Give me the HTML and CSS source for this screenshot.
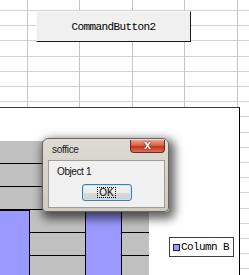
FILE: index.html
```html
<!DOCTYPE html>
<html>
<head>
<meta charset="utf-8">
<link rel="stylesheet" href="styles.css">
</head>
<body>
<div class="sheet">
  <div class="cmd">CommandButton2</div>
  <div class="chart">
    <div class="plot">
      <div class="bar bar-a"></div>
      <div class="bar bar-b"></div>
    </div>
    <div class="legend"><span class="swatch"></span><span class="legend-label">Column B</span></div>
  </div>
  <div class="dialog">
    <div class="titlebar">
      <span class="title">soffice</span>
      <span class="close">x</span>
    </div>
    <div class="client">
      <div class="msg">Object 1</div>
      <div class="actions"><div class="ok"><span class="ok-label">OK</span></div></div>
    </div>
  </div>
</div>
</body>
</html>
```
FILE: styles.css
```css
html, body {
  margin: 0;
  padding: 0;
  background: #fff;
}

.sheet {
  position: relative;
  width: 249px;
  height: 275px;
  overflow: hidden;
  background-color: #fff;
  background-image:
    linear-gradient(to right, #c4c4c4 0 1px, transparent 1px 52px, #c4c4c4 52px 53px, transparent 53px),
    linear-gradient(to bottom, #d2d2d2 0 1px, transparent 1px 15px, #d2d2d2 15px 16px, transparent 16px 30px, #d2d2d2 30px 31px, transparent 31px 46px, #d2d2d2 46px 47px, transparent 47px 61px, #d2d2d2 61px 62px, transparent 62px);
  background-size: 105px 100%, 100% 76px;
  background-position: 27px 0, 0 10px;
}

.cmd {
  position: absolute;
  left: 36px;
  top: 11px;
  width: 155px;
  height: 31px;
  box-sizing: border-box;
  background: #f0f0f0;
  border-top: 1px solid #fafafa;
  border-left: 1px solid #fafafa;
  border-right: 1px solid #1a1a1a;
  border-bottom: 1px solid #1a1a1a;
  display: flex;
  align-items: center;
  justify-content: center;
  font-family: "Liberation Mono", monospace;
  font-size: 11px;
  letter-spacing: -0.6px;
  color: #000;
}

.chart {
  position: absolute;
  left: -10px;
  top: 107px;
  width: 250px;
  height: 200px;
  box-sizing: border-box;
  background: #fff;
  border-top: 1px solid #3a3a3a;
  border-right: 1px solid #000;
  padding-top: 33px;
}

.plot {
  width: 159px;
  height: 160px;
  background-color: #c0c0c0;
  background-image: linear-gradient(to bottom, #000 0 1px, transparent 1px);
  background-size: 100% 23px;
  background-position: 0 22px;
  display: flex;
  align-items: flex-start;
}

.bar {
  margin-top: 69px;
  height: 100px;
  box-sizing: border-box;
  background: #9999ff;
  border: 1px solid #000;
}

.bar-a {
  width: 40px;
}

.bar-b {
  width: 37px;
  margin-left: 55px;
}

.legend {
  position: absolute;
  left: 179px;
  top: 129px;
  width: 65px;
  height: 20px;
  box-sizing: border-box;
  border: 1px solid #404040;
  background: #fff;
  display: flex;
  align-items: center;
  padding-left: 3px;
  gap: 1px;
}

.swatch {
  width: 7px;
  height: 7px;
  box-sizing: border-box;
  background: #9999ff;
  border: 1px solid #202050;
}

.legend-label {
  font-family: "Liberation Mono", monospace;
  font-size: 11px;
  letter-spacing: -0.6px;
  color: #000;
}

.dialog {
  position: absolute;
  left: 42px;
  top: 138px;
  width: 127px;
  height: 74px;
  box-sizing: border-box;
  border: 1px solid #6b6760;
  border-radius: 6px 6px 4px 4px;
  background: linear-gradient(to bottom, #dedbd4, #cfcbc3);
  box-shadow: 3px 4px 10px 3px rgba(0, 0, 0, 0.6);
  display: flex;
  flex-direction: column;
}

.titlebar {
  height: 21px;
  display: flex;
  justify-content: space-between;
  align-items: center;
  padding: 0 3px 0 9px;
}

.title {
  font-family: "Liberation Sans", sans-serif;
  font-size: 10px;
  letter-spacing: -0.3px;
  color: #1a1a1a;
}

.close {
  align-self: flex-start;
  margin-top: 1px;
  width: 35px;
  height: 13px;
  box-sizing: border-box;
  border: 1px solid #6e2a1e;
  border-top: none;
  border-radius: 0 0 4px 4px;
  background: linear-gradient(to bottom, #eba58f 0%, #d9604a 45%, #c2341c 55%, #d6745c 100%);
  color: #fff;
  font-family: "Liberation Sans", sans-serif;
  font-weight: bold;
  font-size: 12px;
  line-height: 11px;
  text-align: center;
  text-shadow: 0 0 2px #5a1a10;
}

.client {
  flex: 1;
  margin: 0 3px 3px 5px;
  background: #f0f0f0;
  border: 1px solid #a09d96;
  padding: 5px 0 0 8px;
}

.msg {
  font-family: "Liberation Sans", sans-serif;
  font-size: 10px;
  line-height: 12px;
  letter-spacing: -0.4px;
  color: #111;
}

.actions {
  display: flex;
  justify-content: center;
  margin-top: 6px;
  margin-left: -8px;
}

.ok {
  width: 50px;
  height: 17px;
  box-sizing: border-box;
  border: 1px solid #3c7fb1;
  border-radius: 3px;
  background: linear-gradient(to bottom, #f4f4f4 0%, #ebebeb 50%, #dcdcdc 51%, #cfcfcf 100%);
  box-shadow: inset 0 0 0 1px #bfe6f8;
  display: flex;
  align-items: center;
  justify-content: center;
}

.ok-label {
  font-family: "Liberation Sans", sans-serif;
  font-size: 10px;
  line-height: 9px;
  padding: 0 1px;
  border: 1px dotted #000;
  color: #000;
}
```
